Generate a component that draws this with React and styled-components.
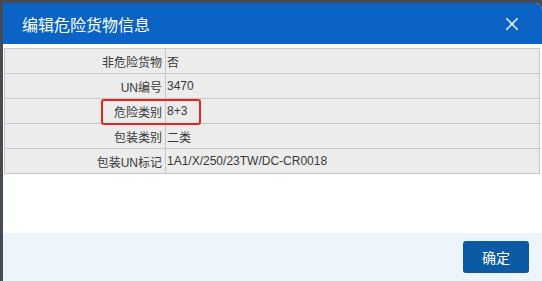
import React from 'react';
import styled, { createGlobalStyle } from 'styled-components';

const rows = [
  { label: '非危险货物', value: '否' },
  { label: 'UN编号', value: '3470' },
  { label: '危险类别', value: '8+3', marked: true },
  { label: '包装类别', value: '二类' },
  { label: '包装UN标记', value: '1A1/X/250/23TW/DC-CR0018' },
];

function App() {
  return (
    <>
      <GlobalStyle />
      <Dialog>
        <Header>
          <Title>编辑危险货物信息</Title>
          <CloseButton title="关闭">
            <svg width="12" height="12" viewBox="0 0 12 12">
              <path d="M0.8 0.8L11.2 11.2M11.2 0.8L0.8 11.2" stroke="#fff" strokeWidth="1.5" strokeLinecap="round" />
            </svg>
          </CloseButton>
        </Header>
        <Body>
          <TableWrap>
            <InfoTable>
              <tbody>
                {rows.map((row) => (
                  <tr key={row.label}>
                    <LabelCell>{row.label}</LabelCell>
                    <ValueCell>{row.value}</ValueCell>
                  </tr>
                ))}
              </tbody>
            </InfoTable>
            <Highlight />
          </TableWrap>
        </Body>
        <Footer>
          <OkButton>确定</OkButton>
        </Footer>
      </Dialog>
    </>
  );
}

export default App;

const GlobalStyle = createGlobalStyle`
  html, body {
    margin: 0;
    padding: 0;
    background: #454b55;
    font-family: "Liberation Sans", "Noto Sans CJK SC", sans-serif;
    overflow: hidden;
  }
`;

const Dialog = styled('div')`
  margin: 3px 0 0 3px;
  width: 539px;
  height: 278px;
  background: #fff;
  border-top-right-radius: 7px;
  overflow: hidden;
  display: flex;
  flex-direction: column;
`;

const Header = styled('div')`
  height: 41px;
  flex-shrink: 0;
  background: #0b64c5;
  display: flex;
  align-items: center;
  justify-content: space-between;
  padding: 0 24px 0 19px;
`;

const Title = styled('h1')`
  margin: 0;
  font-size: 16px;
  font-weight: normal;
  color: #fff;
`;

const CloseButton = styled('div')`
  cursor: pointer;
  width: 12px;
  height: 12px;
  display: flex;
`;

const Body = styled('div')`
  flex: 1;
  padding: 4px 0 0 1px;
`;

const TableWrap = styled('div')`
  position: relative;
  width: 536px;
`;

const InfoTable = styled('table')`
  width: 100%;
  border-collapse: collapse;
  background: #ececec;
  border: 1px solid #c2c2c2;
  font-size: 12px;
  color: #383838;
`;

const LabelCell = styled('td')`
  width: 157px;
  height: 24px;
  padding: 0 3px 0 0;
  text-align: right;
  border: 1px solid #c8c8c8;
`;

const ValueCell = styled('td')`
  height: 24px;
  padding: 0 0 0 1px;
  border: 1px solid #c8c8c8;
`;

const Highlight = styled('div')`
  position: absolute;
  left: 97px;
  top: 51px;
  width: 96px;
  height: 22px;
  border: 2px solid #e8231b;
  border-radius: 3px;
  pointer-events: none;
`;

const Footer = styled('div')`
  height: 48px;
  flex-shrink: 0;
  background: #edf5fc;
  display: flex;
  align-items: center;
  justify-content: flex-end;
  padding-right: 13px;
`;

const OkButton = styled('button')`
  width: 66px;
  height: 32px;
  border: none;
  border-radius: 3px;
  background: #0b5aa3;
  color: #fff;
  font-family: "Liberation Sans", "Noto Sans CJK SC", sans-serif;
  font-size: 14px;
  cursor: pointer;
`;
